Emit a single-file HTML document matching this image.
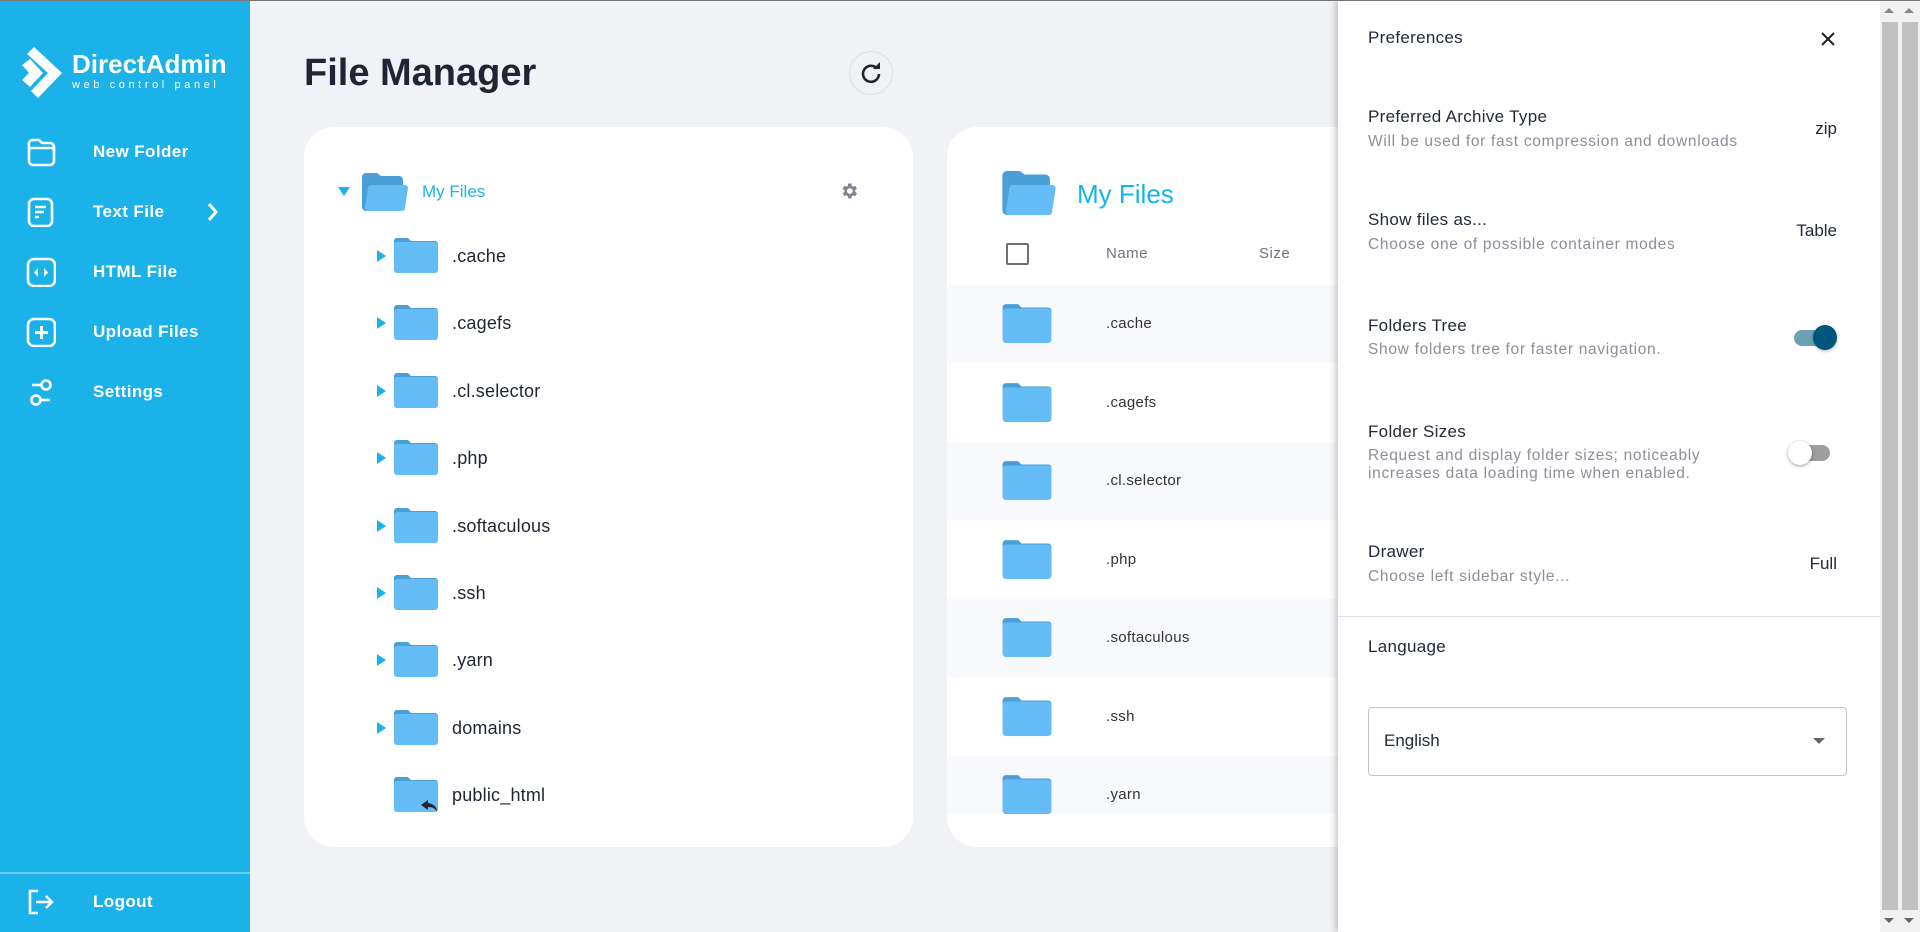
<!DOCTYPE html>
<html><head><meta charset="utf-8"><style>
*{box-sizing:border-box;margin:0;padding:0}
body{width:1920px;height:932px;overflow:hidden;background:#f1f2f6;font-family:"Liberation Sans",sans-serif;position:relative;color:#1f2533}
.a{position:absolute;white-space:nowrap}
#top{position:absolute;left:0;top:0;width:1920px;height:1px;background:#777;z-index:9}
#side{position:absolute;left:0;top:0;width:250px;height:932px;background:#1ab2e8;color:#fff}
.mi{position:absolute;left:93px;font-size:17px;font-weight:bold;letter-spacing:.4px;line-height:20px}
.ic{position:absolute;left:26px}
.card{position:absolute;background:#fff;border-radius:30px;overflow:hidden}
.tt{position:absolute;font-size:18px;color:#1f2533;line-height:20px;letter-spacing:.2px}
.tr{position:absolute;width:0;height:0;border-top:6px solid transparent;border-bottom:6px solid transparent;border-left:9px solid #1ab2e8}
.row{position:absolute;left:0;width:600px;height:78px}
.rt{position:absolute;left:159px;font-size:15px;color:#333;line-height:18px;letter-spacing:.3px}
#drawer{position:absolute;left:1338px;top:0;width:542px;height:932px;background:#fff;box-shadow:-3px 0 6px rgba(0,0,0,.2)}
.h{position:absolute;left:30px;font-size:17px;color:#222a3a;line-height:20px;letter-spacing:.3px}
.s{position:absolute;left:30px;font-size:15.5px;color:#8a8f99;line-height:19px;letter-spacing:.7px}
.v{position:absolute;right:43px;font-size:17px;color:#222a3a;line-height:20px}
.sb{position:absolute;top:0;width:20px;height:932px;background:#f1f1f1}
.sb div{position:absolute;left:2px;top:22px;width:16px;height:888px;background:#c1c1c1}
</style></head><body>
<div id="top"></div>
<div id="side">
 <svg class="a" style="left:22px;top:47px" width="42" height="51" viewBox="0 0 42 51"><path d="M12 0 L40 26 L16 51 L9 44 L26 26 L5 7Z" fill="#fff"/><path d="M0 18 L8 12 L21 26 L8 40 L0 33 L7 26Z" fill="#fff"/></svg>
 <div class="a" style="left:72px;top:50px;font-size:26px;font-weight:bold;letter-spacing:0px;line-height:28px">DirectAdmin</div>
 <div class="a" style="left:72px;top:79px;font-size:11px;letter-spacing:3.6px;line-height:12px">web control panel</div>
 <svg class="ic" style="top:137px" width="30" height="30" viewBox="0 0 30 30" fill="none" stroke="#fff" stroke-width="2.6"><path d="M3 8 a4 4 0 0 1 4-5 h6 l3 3 h8 a4 4 0 0 1 4 4 v14 a4 4 0 0 1-4 4 H7 a4 4 0 0 1-4-4Z"/><path d="M3 14 a3 3 0 0 1 3-3 h19 a3 3 0 0 1 3 3"/></svg>
 <div class="mi" style="top:142px">New Folder</div>
 <svg class="ic" style="top:197px" width="30" height="30" viewBox="0 0 30 30" fill="none" stroke="#fff" stroke-width="2.6"><rect x="3" y="2" width="23" height="27" rx="5"/><path d="M9 10h11M9 15h9M9 20h4"/></svg>
 <div class="mi" style="top:202px">Text File</div>
 <svg class="a" style="left:207px;top:202px" width="12" height="20" viewBox="0 0 12 20"><path d="M2 2l7 8-7 8" fill="none" stroke="#fff" stroke-width="3"/></svg>
 <svg class="ic" style="top:257px" width="30" height="30" viewBox="0 0 30 30" fill="none" stroke="#fff" stroke-width="2.6"><rect x="2" y="2" width="27" height="27" rx="6"/><path d="M12 11l-4 4.5 4 4.5Z M18 11l4 4.5-4 4.5Z" fill="#fff" stroke="none"/></svg>
 <div class="mi" style="top:262px">HTML File</div>
 <svg class="ic" style="top:317px" width="30" height="30" viewBox="0 0 30 30" fill="none" stroke="#fff" stroke-width="2.6"><rect x="2" y="2" width="27" height="27" rx="6"/><path d="M15.5 9v13M9 15.5h13" stroke-width="3"/></svg>
 <div class="mi" style="top:322px">Upload Files</div>
 <svg class="ic" style="top:377px" width="30" height="30" viewBox="0 0 30 30" fill="none" stroke="#fff" stroke-width="2.6"><circle cx="20" cy="8" r="4.5"/><path d="M6 8h9"/><circle cx="10" cy="23" r="4.5"/><path d="M15 23h9"/></svg>
 <div class="mi" style="top:382px">Settings</div>
 <div class="a" style="left:0;top:872px;width:250px;height:2px;background:rgba(255,255,255,.35)"></div>
 <svg class="ic" style="top:887px" width="30" height="30" viewBox="0 0 30 30" fill="none" stroke="#fff" stroke-width="2.6"><path d="M12 4H4v22h8"/><path d="M10 15h16M20 9l6 6-6 6"/></svg>
 <div class="mi" style="top:892px">Logout</div>
</div>
<div class="a" style="left:304px;top:52px;font-size:38px;font-weight:bold;color:#1f2533;line-height:42px">File Manager</div>
<div class="a" style="left:849px;top:51px;width:44px;height:44px;border-radius:50%;border:1px solid #dcdde2"></div>
<svg class="a" style="left:860px;top:62px" width="22" height="22" viewBox="0 0 22 22"><path d="M17 6.5A8 8 0 1 0 19 12" fill="none" stroke="#1f2533" stroke-width="2.6"/><path d="M13 7h7V0Z" fill="#1f2533"/></svg>

<div class="card" style="left:304px;top:127px;width:609px;height:720px">
 <div class="a" style="left:34px;top:60px;width:0;height:0;border-left:6px solid transparent;border-right:6px solid transparent;border-top:9px solid #1ab2e8"></div>
 <svg class="a" style="left:58px;top:46px" width="46" height="38" viewBox="0 0 46 38"><path d="M0 4a4 4 0 0 1 4-4h11l4 3h18a4 4 0 0 1 4 4v27a4 4 0 0 1-4 4H4a4 4 0 0 1-4-4Z" fill="#4a9fd6"/><path d="M6 15a3 3 0 0 1 3-3h34a3 3 0 0 1 3 3l-3 20a3 3 0 0 1-3 3H6a3 3 0 0 1-3-3Z" fill="#64bdf6"/></svg>
 <div class="a" style="left:118px;top:55px;font-size:17px;color:#1ab2e8;line-height:20px">My Files</div>
 <svg class="a" style="left:535px;top:54px" width="20" height="20" viewBox="0 0 24 24"><path fill="#7d8595" d="M19.4 13a7.5 7.5 0 0 0 0-2l2.1-1.6-2-3.5-2.5 1a7 7 0 0 0-1.7-1L15 3h-4l-.4 2.8a7 7 0 0 0-1.7 1l-2.5-1-2 3.5L6.6 11a7.5 7.5 0 0 0 0 2l-2.1 1.6 2 3.5 2.5-1a7 7 0 0 0 1.7 1L11 21h4l.4-2.8a7 7 0 0 0 1.7-1l2.5 1 2-3.5ZM13 15.5a3.5 3.5 0 1 1 0-7 3.5 3.5 0 0 1 0 7Z"/></svg>
 <div id="tree"></div>
</div>

<div class="card" style="left:947px;top:127px;width:600px;height:720px">
 <svg class="a" style="left:55px;top:44px" width="54" height="44" viewBox="0 0 46 38"><path d="M0 4a4 4 0 0 1 4-4h11l4 3h18a4 4 0 0 1 4 4v27a4 4 0 0 1-4 4H4a4 4 0 0 1-4-4Z" fill="#4a9fd6"/><path d="M6 15a3 3 0 0 1 3-3h34a3 3 0 0 1 3 3l-3 20a3 3 0 0 1-3 3H6a3 3 0 0 1-3-3Z" fill="#64bdf6"/></svg>
 <div class="a" style="left:130px;top:52px;font-size:26px;color:#1ab2e8;line-height:30px">My Files</div>
 <div class="a" style="left:59px;top:116px;width:23px;height:22px;border:2px solid #6f6f6f;border-radius:2px"></div>
 <div class="a" style="left:159px;top:118px;font-size:15px;color:#6b7280;letter-spacing:.5px">Name</div>
 <div class="a" style="left:312px;top:118px;font-size:15px;color:#6b7280;letter-spacing:.5px">Size</div>
 <div class="a" style="left:0;top:0;width:600px;height:687px;overflow:hidden"><div id="rows"></div></div>
</div>

<div id="drawer">
 <div class="h" style="top:28px">Preferences</div>
 <svg class="a" style="left:483px;top:32px" width="14" height="14" viewBox="0 0 14 14"><path d="M1 1l12 12M13 1L1 13" stroke="#222" stroke-width="2"/></svg>
 <div class="h" style="top:107px">Preferred Archive Type</div>
 <div class="s" style="top:132px">Will be used for fast compression and downloads</div>
 <div class="v" style="top:119px">zip</div>
 <div class="h" style="top:210px">Show files as...</div>
 <div class="s" style="top:235px">Choose one of possible container modes</div>
 <div class="v" style="top:221px">Table</div>
 <div class="h" style="top:316px">Folders Tree</div>
 <div class="s" style="top:340px">Show folders tree for faster navigation.</div>
 <div class="a" style="left:456px;top:330px;width:36px;height:16px;border-radius:8px;background:#6aa2b4"></div>
 <div class="a" style="left:475px;top:325px;width:24px;height:25px;border-radius:50%;background:#00567a;box-shadow:0 1px 3px rgba(0,0,0,.3)"></div>
 <div class="h" style="top:422px">Folder Sizes</div>
 <div class="s" style="top:446px">Request and display folder sizes; noticeably</div>
 <div class="s" style="top:464px">increases data loading time when enabled.</div>
 <div class="a" style="left:458px;top:445px;width:34px;height:16px;border-radius:8px;background:#9e9e9e"></div>
 <div class="a" style="left:450px;top:441px;width:24px;height:24px;border-radius:50%;background:#fff;box-shadow:0 1px 3px rgba(0,0,0,.4)"></div>
 <div class="h" style="top:542px">Drawer</div>
 <div class="s" style="top:567px">Choose left sidebar style...</div>
 <div class="v" style="top:554px">Full</div>
 <div class="a" style="left:0;top:616px;width:542px;height:1px;background:#e0e0e0"></div>
 <div class="h" style="top:637px">Language</div>
 <div class="a" style="left:30px;top:707px;width:479px;height:69px;border:1px solid #c4c4c4;border-radius:4px"></div>
 <div class="a" style="left:46px;top:731px;font-size:17px;color:#222a3a;line-height:20px">English</div>
 <div class="a" style="left:475px;top:738px;width:0;height:0;border-left:6px solid transparent;border-right:6px solid transparent;border-top:6px solid #666"></div>
</div>
<div class="sb" style="left:1880px"><div></div></div>
<div class="sb" style="left:1900px"><div></div></div>
<div class="a" style="left:1884px;top:8px;border-left:5px solid transparent;border-right:5px solid transparent;border-bottom:5px solid #888"></div>
<div class="a" style="left:1904px;top:8px;border-left:5px solid transparent;border-right:5px solid transparent;border-bottom:5px solid #888"></div>
<div class="a" style="left:1884px;top:918px;border-left:5px solid transparent;border-right:5px solid transparent;border-top:5px solid #666"></div>
<div class="a" style="left:1904px;top:918px;border-left:5px solid transparent;border-right:5px solid transparent;border-top:5px solid #666"></div>

<script>
var names=[".cache",".cagefs",".cl.selector",".php",".softaculous",".ssh",".yarn","domains","public_html"];
var F='<svg width="44" height="36" viewBox="0 0 44 36"><path d="M0 4a3 3 0 0 1 3-3h11l3 3h24a3 3 0 0 1 3 3v3H0Z" fill="#4a9fd6"/><rect x="0" y="5" width="44" height="31" rx="3" fill="#64bdf6"/></svg>';
var t='';
names.forEach(function(n,i){var cy=129+i*67.4;
 if(i<8)t+='<div class="tr" style="left:73px;top:'+(cy-6)+'px"></div>';
 t+='<div class="a" style="left:90px;top:'+(cy-19)+'px">'+F+'</div>';
 if(i==8)t+='<svg class="a" style="left:117px;top:'+(cy+5)+'px" width="16" height="12" viewBox="0 0 16 12"><path d="M7 0L0 5l7 5V7c4 0 7 1 9 5 0-5-3-8-9-9Z" fill="#1f2533"/></svg>';
 t+='<div class="tt" style="left:148px;top:'+(cy-10)+'px">'+n+'</div>';});
document.getElementById('tree').innerHTML=t;
var r='';
names.slice(0,7).forEach(function(n,i){var top=158+i*78.5;
 r+='<div class="row" style="top:'+top+'px;background:'+(i%2==0?'#f8f9fc':'#fff')+'"><div class="a" style="left:55px;top:18px">'+F.replace('width="44" height="36"','width="50" height="40"')+'</div><div class="rt" style="top:30px">'+n+'</div></div>';});
document.getElementById('rows').innerHTML=r;
</script>
</body></html>
